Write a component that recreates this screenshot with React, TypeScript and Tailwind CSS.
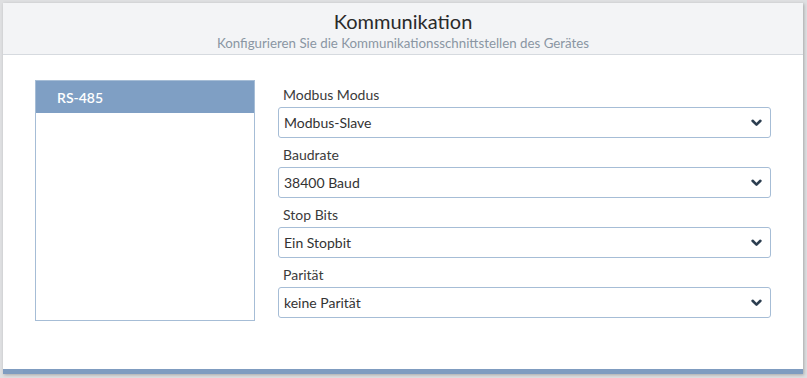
import React from "react";

const Chevron = () => (
  <svg width="11" height="8" viewBox="0 0 11 8" className="shrink-0">
    <path d="M1.6 1.8 L5.5 5.6 L9.4 1.8" fill="none" stroke="#2c3e50" strokeWidth="2.6" strokeLinecap="round" strokeLinejoin="round" />
  </svg>
);

const Field = ({ label, value, first }: { label: string; value: string; first?: boolean }) => (
  <div className={first ? "flex flex-col" : "flex flex-col mt-[7px]"}>
    <div className="h-[20px] leading-[20px] text-[14px] text-[#3b3b3b] pl-[5px]">{label}</div>
    <div className="mt-[2px] h-[31px] rounded-[3px] border border-[#a6bdd6] bg-white flex items-center justify-between pl-[5px] pr-[8px] text-[14px] text-[#333]">
      <span>{value}</span>
      <Chevron />
    </div>
  </div>
);

export default function App() {
  return (
    <div className="w-[807px] h-[378px] bg-[#dedfe1] pt-[3px] pl-[3px] pr-[4px] pb-[4px]" style={{ fontFamily: "Lato, 'Open Sans', sans-serif" }}>
      <div className="h-full flex flex-col bg-white shadow-[1px_1px_3px_rgba(0,0,0,0.25)]">
        <div className="h-[52px] bg-[#f3f4f6] border-b border-[#d6dadf] flex flex-col items-center pt-[5px]">
          <div className="text-[20px] leading-[26px] text-[#2a2a2a]">Kommunikation</div>
          <div className="text-[13.3px] leading-[18px] text-[#8a96a3]">Konfigurieren Sie die Kommunikationsschnittstellen des Gerätes</div>
        </div>
        <div className="flex-1 flex px-[32px] pt-[25px]">
          <div className="w-[220px] h-[241px] border border-[#a6bdd6] flex flex-col">
            <div className="h-[32px] bg-[#7f9fc4] text-white text-[14px] font-semibold flex items-center pl-[21px]">RS-485</div>
          </div>
          <div className="flex-1 ml-[23px] pt-[5px] flex flex-col">
            <Field first label="Modbus Modus" value="Modbus-Slave" />
            <Field label="Baudrate" value="38400 Baud" />
            <Field label="Stop Bits" value="Ein Stopbit" />
            <Field label="Parität" value="keine Parität" />
          </div>
        </div>
        <div className="h-[5px] bg-[#7f9cc0]" />
      </div>
    </div>
  );
}
